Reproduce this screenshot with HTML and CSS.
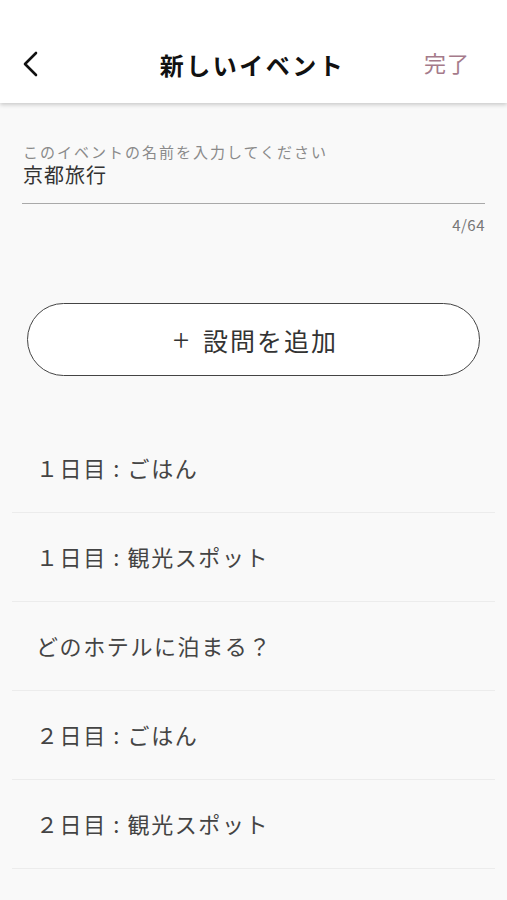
FILE: index.html
```html
<!DOCTYPE html>
<html lang="ja">
<head>
<meta charset="utf-8">
<link rel="stylesheet" href="styles.css">
</head>
<body>
<header class="nav">
  <button class="back" aria-label="戻る">
    <svg width="18" height="26" viewBox="0 0 18 26"><path d="M14 2 L3 13 L14 24" fill="none" stroke="#111" stroke-width="2.6" stroke-linecap="round" stroke-linejoin="round"/></svg>
  </button>
  <h1 class="title">新しいイベント</h1>
  <span class="done">完了</span>
</header>
<main class="content">
  <section class="field">
    <div class="label">このイベントの名前を入力してください</div>
    <div class="value">京都旅行</div>
    <div class="counter">4/64</div>
  </section>
  <div class="btn-wrap">
    <button class="add"><span class="plus">+</span>設問を追加</button>
  </div>
  <ul class="list">
    <li class="item">１日目 : ごはん</li>
    <li class="item">１日目 : 観光スポット</li>
    <li class="item alt">どのホテルに泊まる？</li>
    <li class="item">２日目 : ごはん</li>
    <li class="item">２日目 : 観光スポット</li>
  </ul>
</main>
</body>
</html>
```

FILE: styles.css
```css
* { box-sizing: border-box; }
html, body { margin: 0; padding: 0; }
body {
  width: 507px;
  height: 900px;
  overflow: hidden;
  background: #f9f9f9;
  font-family: "Noto Sans CJK JP", "Noto Sans", sans-serif;
  color: #333;
}
.nav {
  height: 103px;
  background: #fff;
  display: grid;
  grid-template-columns: 1fr auto 1fr;
  align-items: end;
  padding: 0 37px 21px 22px;
  box-shadow: 0 2px 4px rgba(0,0,0,0.18);
  position: relative;
  z-index: 1;
}
.back {
  border: 0;
  background: none;
  padding: 0;
  width: 18px;
  height: 26px;
  margin-bottom: 5px;
  display: block;
}
.back svg { display: block; }
.title {
  text-align: center;
  margin: 0;
  font-size: 24px;
  font-weight: 700;
  line-height: 34px;
  color: #111;
  letter-spacing: 2.5px;
  padding-left: 13px;
}
.done {
  justify-self: end;
  font-size: 22px;
  line-height: 34px;
  color: #a57a8a;
  margin-bottom: 3px;
  letter-spacing: 1px;
}
.content { padding: 0; }
.field {
  padding: 39px 22px 0 22px;
}
.label {
  font-size: 15px;
  line-height: 20px;
  color: #8a8a8a;
  padding-left: 1px;
  letter-spacing: 2px;
}
.value {
  font-size: 20px;
  line-height: 25px;
  color: #333;
  padding: 0 0 16px 1px;
  letter-spacing: 1px;
  border-bottom: 1.5px solid #a9a9a9;
}
.counter {
  text-align: right;
  font-size: 15px;
  line-height: 20px;
  color: #777;
  padding-top: 11px;
  letter-spacing: 0.5px;
}
.btn-wrap {
  padding: 68px 27px 0 27px;
}
.add {
  display: flex;
  align-items: center;
  justify-content: center;
  width: 453px;
  height: 73px;
  border: 1.5px solid #444;
  border-radius: 37px;
  background: #fff;
  font-family: "Noto Sans CJK JP", "Noto Sans", sans-serif;
  font-size: 25px;
  color: #333;
  letter-spacing: 2px;
  padding: 0 0 0 4px;
}
.plus {
  font-size: 30px;
  font-weight: 300;
  margin-right: 12px;
  line-height: 1;
  position: relative;
  top: -2px;
}
.list {
  list-style: none;
  margin: 48px 12px 0 12px;
  padding: 0;
}
.item {
  height: 89px;
  border-bottom: 1.5px solid #ececec;
  font-size: 22px;
  color: #444;
  padding: 0 0 0 24px;
  display: flex;
  align-items: center;
  padding-bottom: 3px;
  letter-spacing: 1.6px;
}
.item.alt { padding-left: 24px; }
```
